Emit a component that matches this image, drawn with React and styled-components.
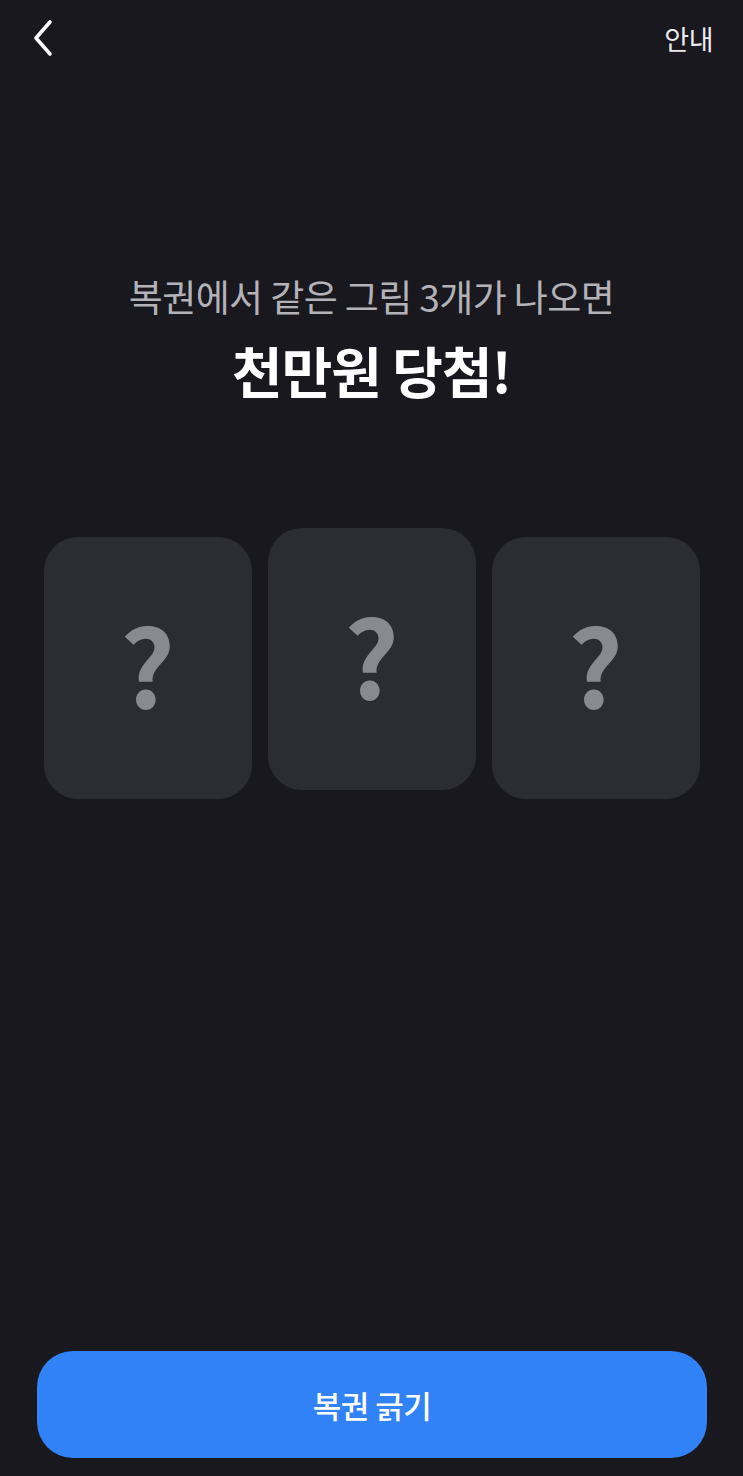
import React from 'react'
import styled, { createGlobalStyle } from 'styled-components'

const GlobalStyle = createGlobalStyle`
  html, body {
    margin: 0;
    padding: 0;
    background: #18181e;
  }
  body {
    font-family: "Noto Sans CJK KR", "Noto Sans", sans-serif;
  }
`

const Page = styled.main`
  min-height: 1476px;
  display: flex;
  flex-direction: column;
  background: #18181e;
  box-sizing: border-box;
`

const TopBar = styled.header`
  height: 76px;
  display: flex;
  align-items: center;
  justify-content: space-between;
  padding: 0 30px 0 30px;
  box-sizing: border-box;
`

const BackButton = styled.button`
  background: none;
  border: none;
  padding: 0;
  width: 28px;
  height: 40px;
  display: flex;
  align-items: center;
  cursor: pointer;
`

const InfoLink = styled.span`
  color: #ececef;
  font-size: 27px;
  font-weight: 400;
  letter-spacing: -0.5px;
`

const Heading = styled.section`
  margin-top: 196px;
  display: flex;
  flex-direction: column;
  align-items: center;
  gap: 17px;
`

const SubTitle = styled.p`
  margin: 0;
  color: #b2b2b8;
  font-size: 37px;
  font-weight: 400;
  letter-spacing: -0.6px;
  line-height: 48px;
`

const Title = styled.h1`
  margin: 0;
  color: #ffffff;
  font-size: 55px;
  font-weight: 700;
  letter-spacing: -1px;
  line-height: 64px;
`

const CardRow = styled.div`
  margin-top: 127px;
  display: flex;
  justify-content: center;
  align-items: flex-start;
  gap: 16px;
`

const Card = styled.div`
  width: 208px;
  height: 262px;
  border-radius: 34px;
  background: #2c2c35;
  display: flex;
  align-items: center;
  justify-content: center;
  margin-top: ${p => (p.$raised ? '0' : '9px')};
`

const Mark = styled.span`
  color: #898992;
  font-family: "Noto Sans CJK KR", "Noto Sans", sans-serif;
  font-size: 107px;
  font-weight: 700;
  line-height: 1;
  margin-top: -12px;
`

const Footer = styled.footer`
  margin-top: auto;
  padding: 0 36px 18px 37px;
`

const PrimaryButton = styled.button`
  width: 100%;
  height: 107px;
  border: none;
  border-radius: 36px;
  background: #3182f6;
  color: #ffffff;
  font-family: "Noto Sans CJK KR", "Noto Sans", sans-serif;
  font-size: 31px;
  font-weight: 500;
  letter-spacing: -0.5px;
  cursor: pointer;
`

const cards = [false, true, false]

export default function App() {
  return (
    <Page>
      <GlobalStyle />
      <TopBar>
        <BackButton aria-label="뒤로">
          <svg width="26" height="38" viewBox="0 0 26 38">
            <path
              d="M20 3 L6 19 L20 35"
              fill="none"
              stroke="#ffffff"
              strokeWidth="3.6"
              strokeLinecap="round"
              strokeLinejoin="round"
            />
          </svg>
        </BackButton>
        <InfoLink>안내</InfoLink>
      </TopBar>

      <Heading>
        <SubTitle>복권에서 같은 그림 3개가 나오면</SubTitle>
        <Title>천만원 당첨!</Title>
      </Heading>

      <CardRow>
        {cards.map((raised, i) => (
          <Card key={i} $raised={raised}>
            <Mark>?</Mark>
          </Card>
        ))}
      </CardRow>

      <Footer>
        <PrimaryButton>복권 긁기</PrimaryButton>
      </Footer>
    </Page>
  )
}
